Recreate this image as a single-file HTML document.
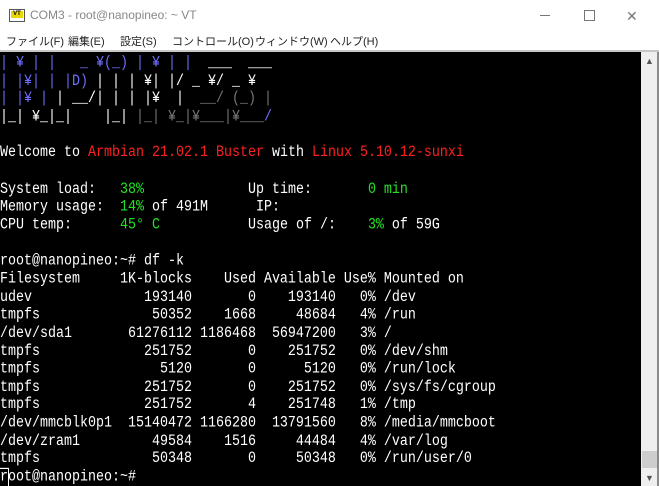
<!DOCTYPE html>
<html><head><meta charset="utf-8"><style>
body{margin:0;width:659px;height:486px;overflow:hidden;background:#fff;font-family:"Liberation Sans","Noto Sans CJK JP",sans-serif;position:relative}
.title{position:absolute;left:0;top:0;width:659px;height:30px;background:#fff}
.title .t{position:absolute;left:30px;top:8px;font-size:12px;color:#888}
.icon{position:absolute;left:9px;top:9px;width:14px;height:11px;background:#fff;border:1px solid #555}
.icon b{position:absolute;left:1px;top:1px;width:12px;height:7px;background:#e8d800;font-size:6px;color:#000;line-height:7px;text-align:center}
.menu{position:absolute;left:0;top:30px;width:659px;height:20px;font-size:11px;color:#222}
.menu span{position:absolute;top:3px;white-space:nowrap}
.sep{position:absolute;left:0;top:50px;width:659px;height:2px;background:#c8c8c8}
.term{position:absolute;left:0;top:52px;width:641px;height:434px;background:#000;overflow:hidden}
pre{margin:0;position:absolute;left:0;top:3px;font-family:"Liberation Mono",monospace;font-size:13.33px;line-height:15.652px;color:#fff;transform:scaleY(1.15);transform-origin:0 0}
.r{color:#ff2020}.g{color:#22e022}.b{color:#6f6fff}.d{color:#777}
.sb{position:absolute;left:641px;top:52px;width:16px;height:434px;background:#efefef}
.thumb{position:absolute;left:642px;top:451px;width:15px;height:17px;background:#cdcdcd}
.edge{position:absolute;left:657px;top:52px;width:2px;height:434px;background:#8a8a8a}
.cur{display:inline-block;outline:1px solid #fff}
</style></head><body>
<div class="title"><div class="icon"><b>VT</b></div><div class="t">COM3 - root@nanopineo: ~ VT</div>
<div style="position:absolute;left:540px;top:15px;width:10px;height:1px;background:#777"></div>
<div style="position:absolute;left:584px;top:10px;width:9px;height:9px;border:1px solid #777"></div>
<div style="position:absolute;left:626px;top:8px;font-size:14px;color:#777">✕</div>
</div>
<div class="menu"><span style="left:6px">ファイル(F)</span><span style="left:68px">編集(E)</span><span style="left:120px">設定(S)</span><span style="left:172px">コントロール(O)</span><span style="left:255px">ウィンドウ(W)</span><span style="left:330px">ヘルプ(H)</span></div>
<div class="sep"></div>
<div class="term"><pre><span class="b">| ¥ | |</span>   <span class="b">_ ¥(_)</span> <span class="b">| ¥ | |</span>  ___  ___
<span class="b">| |¥| |</span> <span class="b">|D)</span> <span>| |</span> <span>| ¥| |/ _ ¥/ _ ¥</span>
<span class="b">| |¥ |</span> <span>| __/| |</span> <span>| |¥  |</span><span class="d">  __/ (_) |</span>
<span>|_| ¥_|_|</span>    <span>|_|</span> <span class="d">|_| ¥_|¥___|¥___</span><span class="b">/</span>

Welcome to <span class="r">Armbian 21.02.1 Buster</span> with <span class="r">Linux 5.10.12-sunxi</span>

System load:   <span class="g">38%</span>             Up time:       <span class="g">0 min</span>
Memory usage:  <span class="g">14%</span> of 491M      IP:
CPU temp:      <span class="g">45° C</span>           Usage of /:    <span class="g">3%</span> of 59G

root@nanopineo:~# df -k
Filesystem     1K-blocks    Used Available Use% Mounted on
udev              193140       0    193140   0% /dev
tmpfs              50352    1668     48684   4% /run
/dev/sda1       61276112 1186468  56947200   3% /
tmpfs             251752       0    251752   0% /dev/shm
tmpfs               5120       0      5120   0% /run/lock
tmpfs             251752       0    251752   0% /sys/fs/cgroup
tmpfs             251752       4    251748   1% /tmp
/dev/mmcblk0p1  15140472 1166280  13791560   8% /media/mmcboot
/dev/zram1         49584    1516     44484   4% /var/log
tmpfs              50348       0     50348   0% /run/user/0
<span class="cur">r</span>oot@nanopineo:~#</pre></div>
<div class="sb"><div style="position:absolute;left:4px;top:4px;font-size:9px;color:#555">▲</div><div style="position:absolute;left:4px;top:421px;font-size:9px;color:#555">▼</div></div>
<div class="thumb"></div>
<div class="edge"></div>
</body></html>
